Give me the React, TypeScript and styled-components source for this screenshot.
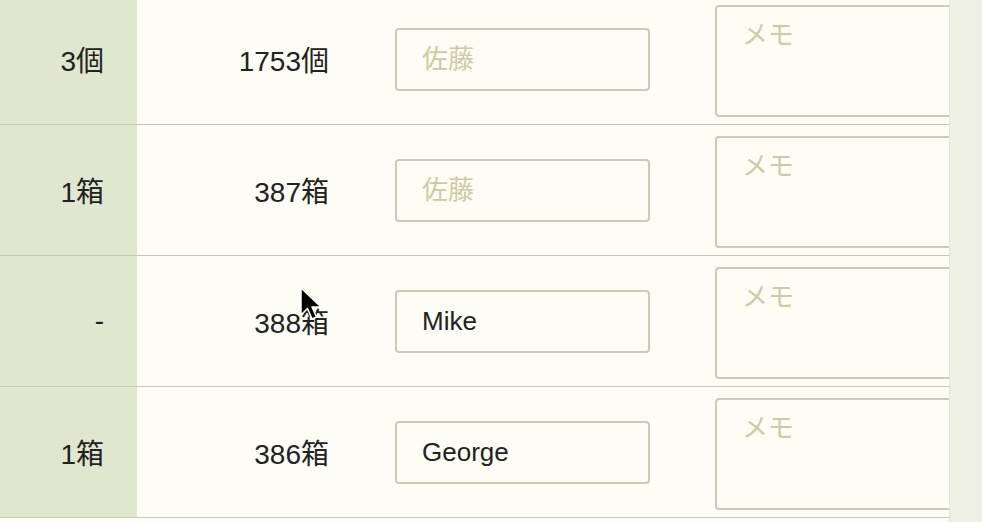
import React from 'react';
import styled, { createGlobalStyle } from 'styled-components';

// Typescript types
interface StockRow {
  order: string;
  stock: string;
  person: string;
  memo: string;
}

// Rows shown in the table
const rows: StockRow[] = [
  { order: '3個', stock: '1753個', person: '', memo: '' },
  { order: '1箱', stock: '387箱', person: '', memo: '' },
  { order: '-', stock: '388箱', person: 'Mike', memo: '' },
  { order: '1箱', stock: '386箱', person: 'George', memo: '' },
];

const fontStack = `"Liberation Sans", "Noto Sans CJK JP", sans-serif`;

const GlobalStyle = createGlobalStyle`
  html, body {
    margin: 0;
    padding: 0;
    background: #fdfdf5;
    overflow: hidden;
  }
  body {
    font-family: ${fontStack};
    color: #222;
  }
`;

// Styled-components
const Page = styled.div`
  position: relative;
  display: flex;
  width: 982px;
  height: 522px;
  overflow: hidden;
`;

const Viewport = styled.div`
  flex: 1;
  overflow: hidden;
`;

const Table = styled.div`
  margin-top: -6px;
  width: 1100px;
`;

const Row = styled.div`
  display: grid;
  grid-template-columns: 137px 224px 354px 1fr;
  height: 130px;
  border-bottom: 1px solid #c6c8b5;
`;

const OrderCell = styled.div`
  display: flex;
  align-items: center;
  justify-content: flex-end;
  padding-right: 33px;
  background: #e0e7cf;
  font-size: 28px;
`;

const StockCell = styled.div`
  display: flex;
  align-items: center;
  justify-content: flex-end;
  padding-right: 32px;
  font-size: 28px;
`;

const PersonCell = styled.div`
  display: flex;
  align-items: center;
  padding-left: 34px;
`;

const MemoCell = styled.div`
  padding-top: 11px;
`;

const NameInput = styled.input`
  box-sizing: border-box;
  width: 255px;
  height: 63px;
  padding: 0 25px;
  border: 2px solid #cbccb8;
  border-radius: 4px;
  background: transparent;
  font-family: ${fontStack};
  font-size: 26px;
  color: #222;
  outline: none;
  &::placeholder {
    color: #cdcba6;
  }
`;

const MemoArea = styled.textarea`
  box-sizing: border-box;
  width: 320px;
  height: 112px;
  padding: 12px 25px;
  border: 2px solid #cbccb8;
  border-radius: 4px;
  background: transparent;
  resize: none;
  font-family: ${fontStack};
  font-size: 26px;
  line-height: 32px;
  outline: none;
  &::placeholder {
    color: #cdcba6;
  }
`;

const ScrollTrack = styled.div`
  width: 32px;
  background: #eef0e4;
  border-left: 1px solid #e4e6d6;
`;

const Cursor = styled.svg`
  position: absolute;
  left: 299px;
  top: 286px;
`;

// Component
export default function App() {
  return (
    <>
      <GlobalStyle />
      <Page>
        <Viewport>
          <Table>
            {rows.map((row: StockRow, index: number) => (
              <Row key={index}>
                <OrderCell>{row.order}</OrderCell>
                <StockCell>{row.stock}</StockCell>
                <PersonCell>
                  <NameInput placeholder="佐藤" defaultValue={row.person} />
                </PersonCell>
                <MemoCell>
                  <MemoArea placeholder="メモ" defaultValue={row.memo} />
                </MemoCell>
              </Row>
            ))}
          </Table>
        </Viewport>
        <ScrollTrack />
        {/* mouse pointer over the table */}
        <Cursor width="24" height="36" viewBox="0 0 24 36">
          <path d="M2 2 L2 29 L8.5 22.5 L13 33 L17.5 31 L13 21 L22 21 Z" fill="#000" stroke="#fff" strokeWidth="1.5" strokeLinejoin="round" />
        </Cursor>
      </Page>
    </>
  );
}
